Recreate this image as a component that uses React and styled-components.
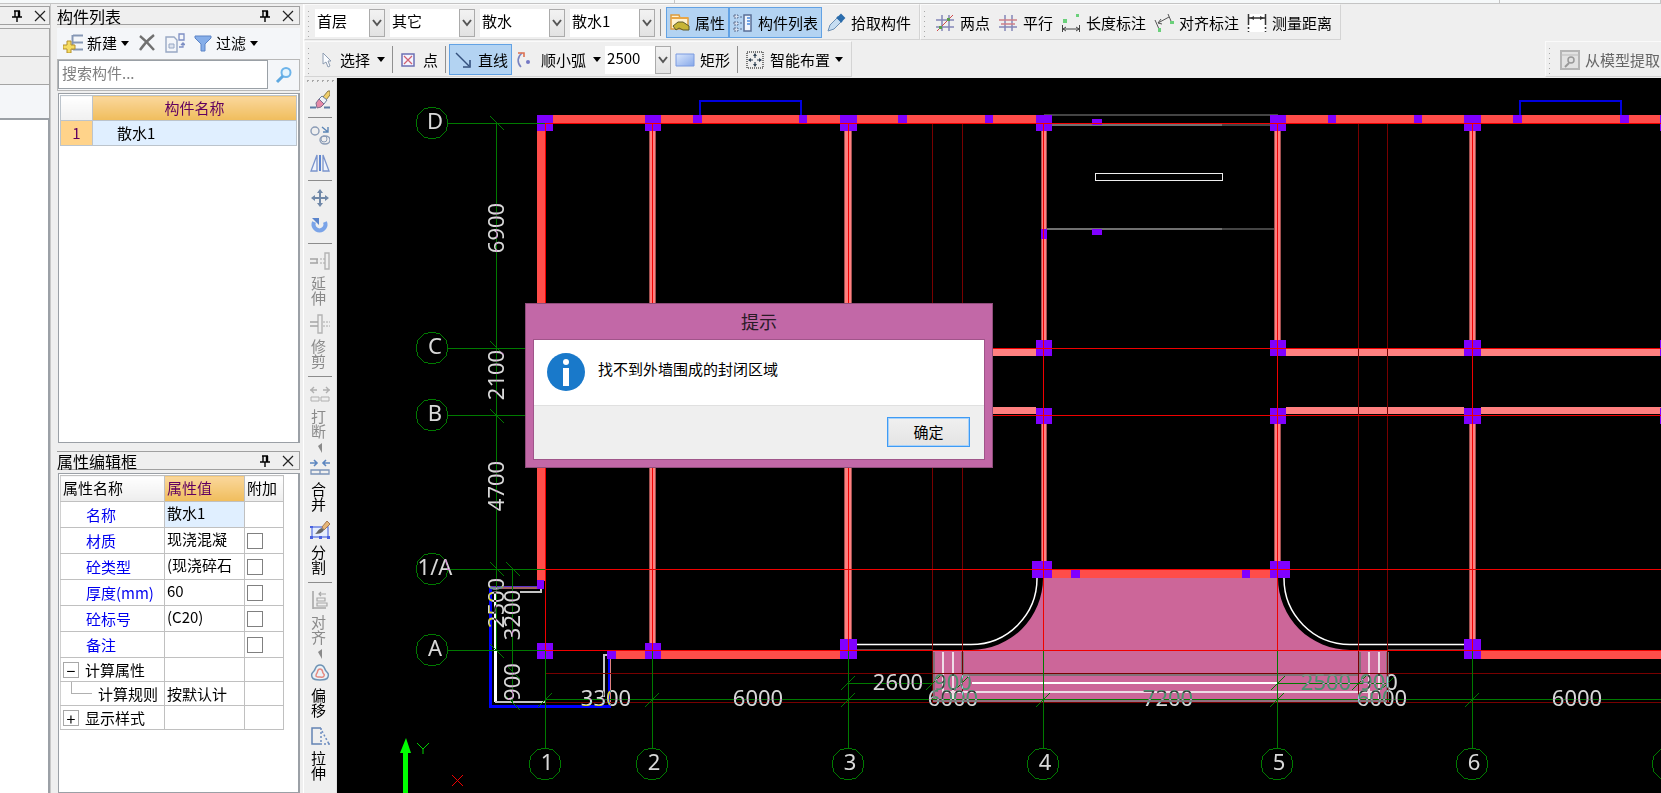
import React from 'react';
import styled, { createGlobalStyle, css } from 'styled-components';

const FONT = '"Noto Sans CJK SC", sans-serif';

/* ---------- icons ---------- */

const Svg = ({ w = 20, h = 20, children }) => (
  <svg width={w} height={h} viewBox={`0 0 ${w} ${h}`} fill="none" aria-hidden="true">{children}</svg>
);

const PinIcon = () => (
  <Svg w={12} h={14}>
    <path d="M3 2h6M4 2v6M1 8h10M6 8v5" stroke="#000" strokeWidth="1.4" />
    <path d="M8 2v6" stroke="#000" strokeWidth="2.4" />
  </Svg>
);

const CloseIcon = () => (
  <Svg w={12} h={12}><path d="M1 1l10 10M11 1L1 11" stroke="#222" strokeWidth="1.2" /></Svg>
);

const Caret = ({ color = '#000' }) => (
  <Svg w={8} h={5}><path d="M0 0h8L4 5z" fill={color} /></Svg>
);

const Chevron = () => (
  <Svg w={10} h={8}><path d="M1 1l4 5 4-5" stroke="#555" strokeWidth="2" /></Svg>
);

const NewIcon = () => (
  <Svg>
    <path d="M10 2.5h10M10 9.5h10M10 16.5h10M9.5 2v15" stroke="#8597b5" strokeWidth="2" />
    <path d="M4 8h4v4h4v4H8v4H4v-4H0v-4h4z" fill="#f5dc62" stroke="#b58f2a" />
  </Svg>
);

const DeleteIcon = () => (
  <Svg w={18} h={18}><path d="M2 2c5 4 9 8 14 14M16 1C11 5 6 10 2 16" stroke="#707070" strokeWidth="2.4" /></Svg>
);

const CopyPageIcon = () => (
  <Svg>
    <path d="M1 4h8l3 3v12H1z" fill="#f4f6fa" stroke="#98a8c4" strokeWidth="1.4" />
    <path d="M4 11h5v4H4z" fill="#dde3ee" stroke="#98a8c4" />
    <path d="M14 1h5v6h-5zM14 14h4v-4M16 12l2-2 2 2" stroke="#7d8fc4" strokeWidth="1.3" />
  </Svg>
);

const FilterIcon = () => (
  <Svg w={18} h={18}><path d="M1 2h16v2l-6 6v7H7v-7L1 4z" fill="#86aee9" stroke="#5c84c6" /></Svg>
);

const SearchIcon = () => (
  <Svg w={18} h={18}>
    <circle cx="11" cy="6.5" r="4.5" fill="#e5f4fd" stroke="#6db4ea" strokeWidth="2" />
    <path d="M8 10l-6 6" stroke="#5ea8e0" strokeWidth="3" />
  </Svg>
);

const PropIcon = () => (
  <Svg>
    <path d="M1 2h8l1 3h8v11H1z" fill="#fff2d0" stroke="#dd9c3c" strokeWidth="1.5" />
    <path d="M1 5h17" stroke="#e9a646" strokeWidth="2" />
    <path d="M3 13l5-4h5l6 4v4h-6l-4-2-3 2z" fill="#c7b436" stroke="#5e5a2a" />
  </Svg>
);

const ListIcon = () => (
  <Svg>
    <path d="M1 2h4v3H1zM1 9h4v3H1zM1 15h4v3H1z" fill="#d6e0f0" stroke="#5d6f90" strokeDasharray="2 1" />
    <path d="M7 4h2M7 10h2M7 16h2" stroke="#5d6f90" />
    <path d="M11 2h7v16h-7z" fill="#f0f5fc" stroke="#5a6f96" strokeWidth="1.5" />
    <path d="M14 5h3M14 8h3M14 11h3" stroke="#4a8be0" strokeWidth="1.5" />
  </Svg>
);

const DropperIcon = () => (
  <Svg>
    <path d="M2 18l2-6 7-7 4 4-7 7z" fill="#c6ddf2" stroke="#6c8fb4" />
    <path d="M11 4l5 5M13 4l2-2 3 3-2 2z" fill="#2f78bd" stroke="#2b6cab" strokeWidth="2" />
  </Svg>
);

const TwoPointIcon = () => (
  <Svg>
    <path d="M7 2v16M14 2v16M1 7h18M1 14h18" stroke="#8487b8" strokeWidth="1.5" />
    <path d="M2 18L18 2" stroke="#d04a4a" />
    <path d="M4 13h3v3H4zM12 5h3v3h-3z" fill="#5a9c4a" />
  </Svg>
);

const ParallelIcon = () => (
  <Svg>
    <path d="M7 2v16M14 2v16M1 14h18" stroke="#8487b8" strokeWidth="1.5" />
    <path d="M1 7h18M3 11h14" stroke="#d08088" strokeWidth="1.4" />
  </Svg>
);

const LengthIcon = () => (
  <Svg>
    <path d="M2 6h4v4H2zM15 1h3v3h-3z" fill="#6ad07a" />
    <path d="M1.5 12v7M18.5 12v7M2 16h16M5 14l-3 2 3 2M15 14l3 2-3 2" stroke="#444" />
  </Svg>
);

const AlignDimIcon = () => (
  <Svg>
    <path d="M4 10L15 4M1 7l4 9M14 1l3 7M7 6l-3 4 4 1" stroke="#555" />
    <path d="M4 15h3v4H4zM16 8h4v3h-4z" fill="#6ad07a" />
  </Svg>
);

const MeasureIcon = () => (
  <Svg>
    <path d="M1 1h18v18H1z" fill="#fff" />
    <path d="M1.5 1v18M18.5 1v18" stroke="#333" strokeDasharray="11 2 2 2" strokeWidth="1.5" />
    <path d="M2 5h16" stroke="#333" strokeWidth="1.5" />
    <path d="M3 5l4-2v4zM17 5l-4-2v4z" fill="#333" />
  </Svg>
);

const CursorIcon = () => (
  <Svg w={14} h={18}><path d="M4 2v11l3-2 2 5 2-1-2-5h3z" fill="#fafcff" stroke="#8e9db2" /></Svg>
);

const PointIcon = () => (
  <Svg w={16} h={16}>
    <path d="M2 2h12v12H2z" fill="#f4f4ff" stroke="#6c70b4" strokeWidth="1.5" />
    <path d="M4 4l8 8M12 4l-8 8" stroke="#d06070" strokeWidth="1.2" />
  </Svg>
);

const LineIcon = () => (
  <Svg h={18}>
    <path d="M3 2l13 13" stroke="#34507c" strokeWidth="1.4" />
    <path d="M17 9v7h-7" stroke="#34507c" strokeWidth="1.6" />
  </Svg>
);

const ArcIcon = () => (
  <Svg w={18} h={18}>
    <path d="M6 2C1 6 1 12 5 16" stroke="#7a84c0" strokeWidth="1.6" />
    <path d="M2 2h6v4" stroke="#dd7050" strokeWidth="1.6" />
    <circle cx="12" cy="11" r="2" fill="#7478c4" />
  </Svg>
);

const RectIcon = () => (
  <Svg>
    <defs>
      <linearGradient id="rectFill" x1="0" y1="0" x2="1" y2="1">
        <stop offset="0" stopColor="#dce8fc" />
        <stop offset="1" stopColor="#86a8ea" />
      </linearGradient>
    </defs>
    <path d="M1 4h18v12H1z" fill="url(#rectFill)" stroke="#7a9ae0" />
  </Svg>
);

const SmartIcon = () => (
  <Svg>
    <path d="M2 2h16v16H2z" stroke="#777" strokeDasharray="1 1" strokeWidth="2" />
    <path d="M10 4v4M10 12v4M4 10h4M12 10h4" stroke="#345" strokeWidth="1.2" />
    <path d="M10 3l2 3H8zM10 17l2-3H8zM3 10l3-2v4zM17 10l-3-2v4z" fill="#345" />
  </Svg>
);

const ModelIcon = () => (
  <Svg>
    <path d="M1 1h18v18H1z" fill="#e2e2e2" stroke="#b5b5b5" strokeWidth="2" />
    <path d="M1 5h18" stroke="#bbb" />
    <circle cx="11" cy="10" r="3" stroke="#999" strokeWidth="1.5" />
    <path d="M9 13l-4 4" stroke="#999" strokeWidth="2" />
  </Svg>
);

const EraserIcon = () => (
  <Svg>
    <path d="M0 17.5h6M14 17.5h6" stroke="#5c7ca6" strokeWidth="2" />
    <path d="M13 7l5-6h2v4l-4 5z" fill="#f0cf6a" stroke="#8c7a48" />
    <path d="M9 9l3-3 5 4-3 4z" fill="#eef2f8" stroke="#6b7f9e" />
    <path d="M6 13l3-4 5 5-3 3-4 1z" fill="#e58aa8" stroke="#7e6b8a" />
  </Svg>
);

const CopyIcon = () => (
  <Svg>
    <circle cx="5" cy="6" r="4" stroke="#8b9cb6" strokeWidth="1.4" />
    <path d="M12 2l6 5M18 2v5h-5" stroke="#5c86b6" strokeWidth="1.4" />
    <ellipse cx="15" cy="15" rx="5" ry="4" stroke="#8b9cb6" strokeWidth="1.4" />
    <circle cx="14" cy="14" r="3" stroke="#8b9cb6" />
  </Svg>
);

const MirrorIcon = () => (
  <Svg>
    <path d="M7 2v16H1zM13 2v16h6z" fill="#f0f4fc" stroke="#7a94cc" strokeWidth="1.3" />
    <path d="M10 2v16" stroke="#5c84d0" strokeWidth="2" />
  </Svg>
);

const MoveIcon = () => (
  <Svg>
    <path d="M10 3v14M3 10h14" stroke="#7088a8" strokeWidth="2" />
    <path d="M10 1l3 4H7zM10 19l3-4H7zM1 10l4-3v6zM19 10l-4-3v6z" fill="#7088a8" />
  </Svg>
);

const RotateIcon = () => (
  <Svg>
    <path d="M4 6a6 6 0 1 0 11 0" stroke="#7ba4e8" strokeWidth="4" />
    <path d="M2 2h7v7z" fill="#5a84cc" />
  </Svg>
);

const ExtendIcon = () => (
  <Svg>
    <path d="M15 2h4v16h-4z" stroke="#b4b4b4" strokeWidth="1.4" />
    <path d="M0 8h8M0 12h8M7 8v4" stroke="#a5a5a5" strokeWidth="1.4" />
    <path d="M10 8h5M10 12h5" stroke="#aaa" strokeDasharray="2 1" />
  </Svg>
);

const TrimIcon = () => (
  <Svg>
    <path d="M8 1h4v18H8z" stroke="#b4b4b4" strokeWidth="1.4" />
    <path d="M0 8h8M0 12h8" stroke="#a5a5a5" strokeWidth="1.4" />
    <path d="M13 8h7M13 12h7" stroke="#aaa" strokeDasharray="2 1" />
  </Svg>
);

const BreakIcon = () => (
  <Svg>
    <path d="M1 13h8v4H1zM11 13h8v4h-8z" stroke="#b0b0b0" />
    <path d="M0 6h7M13 6h7M4 3L1 6l3 3M16 3l3 3-3 3" stroke="#b0b0b0" strokeWidth="1.4" />
  </Svg>
);

const MergeIcon = () => (
  <Svg>
    <path d="M1 13h9v4H1zM10 13h9v4h-9z" stroke="#7c94b8" strokeWidth="1.3" />
    <path d="M0 6h7M13 6h7M4 3l3 3-3 3M16 3l-3 3 3 3" stroke="#5c86c0" strokeWidth="1.6" />
  </Svg>
);

const SplitIcon = () => (
  <Svg>
    <path d="M2 7h16v10H2z" fill="#e6eefc" stroke="#6c84e4" strokeWidth="1.4" />
    <path d="M0 6h3v2H0zM0 16h3v3H0zM17 16h3v3h-3zM9 16h3v3H9z" fill="#4a62e0" />
    <path d="M12 7l5-6 3 3-6 6z" fill="#e6b678" stroke="#a87850" />
    <path d="M5 14c2-1 3-5 7-6l2 2c-2 3-5 4-9 4z" fill="#666" />
  </Svg>
);

const AlignIcon = () => (
  <Svg>
    <path d="M3 1v18M3 18h13" stroke="#a8a8a8" strokeWidth="1.6" />
    <path d="M7 8h8v3H7zM7 13h10v3H7zM16 4H9M11 2L9 4l2 2" stroke="#a8a8a8" strokeWidth="1.2" />
  </Svg>
);

const OffsetIcon = () => (
  <Svg>
    <path d="M10 2c5 0 4 4 6 6s3 3 2 6-4 3-8 3-7 0-8-3 0-4 2-6 1-6 6-6z" fill="#eaf2f8" stroke="#6f93b4" strokeWidth="1.5" />
    <path d="M10 6c3 0 2 2 3 4s2 1 1 3-2 1-4 1-4 0-4-1 0-2 1-3 0-4 3-4z" stroke="#e58a80" strokeWidth="1.5" />
  </Svg>
);

const StretchIcon = () => (
  <Svg>
    <path d="M11 2H2v16h8" stroke="#6484b4" strokeWidth="1.5" />
    <path d="M11 2v16M12 5l7 13M10 18h10" stroke="#6c8cc0" strokeDasharray="2 2" strokeWidth="1.5" />
  </Svg>
);

const InfoIcon = () => (
  <Svg w={38} h={38}>
    <circle cx="19" cy="19" r="19" fill="#1979ca" />
    <circle cx="19" cy="9" r="3" fill="#fff" />
    <path d="M16 15h6v18h-6z" fill="#fff" />
  </Svg>
);

/* ---------- toolbars ---------- */

const Picker = ({ label, value, width }) => (
  <PickerBox $width={width}>
    <select aria-label={label} defaultValue={value}>
      <option>{value}</option>
    </select>
    <PickerArrow><Chevron /></PickerArrow>
  </PickerBox>
);

const TopBars = () => (
  <Bars>
    <BarRow>
      <Bar>
        <Grip />
        <Pickers>
          <Picker label="楼层" value="首层" width={70} />
          <Picker label="类型" value="其它" width={85} />
          <Picker label="构件类型" value="散水" width={85} />
          <Picker label="构件" value="散水1" width={85} />
        </Pickers>
        <Divider $wide />
        <BarButton $active><PropIcon />属性</BarButton>
        <BarButton $active><ListIcon />构件列表</BarButton>
        <BarButton><DropperIcon />拾取构件</BarButton>
      </Bar>
      <Bar>
        <Grip />
        <BarButton><TwoPointIcon />两点</BarButton>
        <BarButton><ParallelIcon />平行</BarButton>
        <BarButton><LengthIcon />长度标注</BarButton>
        <BarButton><AlignDimIcon />对齐标注</BarButton>
        <BarButton><MeasureIcon />测量距离</BarButton>
      </Bar>
    </BarRow>
    <BarRow>
      <Bar>
        <Grip />
        <BarButton $wide><CursorIcon />选择<Caret /></BarButton>
        <Divider />
        <BarButton $wide><PointIcon />点</BarButton>
        <Divider />
        <BarButton $active><LineIcon />直线</BarButton>
        <BarButton $wide><ArcIcon />顺小弧<Caret /></BarButton>
        <Picker label="半径" value="2500" width={66} />
        <BarButton><RectIcon />矩形</BarButton>
        <Divider />
        <BarButton><SmartIcon />智能布置<Caret /></BarButton>
      </Bar>
      <Spacer />
      <Bar $end>
        <Grip />
        <BarButton disabled><ModelIcon />从模型提取</BarButton>
      </Bar>
    </BarRow>
  </Bars>
);

const SideBar = () => (
  <Side>
    <SideGrip />
    <SideTool aria-label="删除"><SideIcon><EraserIcon /></SideIcon></SideTool>
    <SideRule />
    <SideTool aria-label="复制"><SideIcon><CopyIcon /></SideIcon></SideTool>
    <SideTool aria-label="镜像"><SideIcon><MirrorIcon /></SideIcon></SideTool>
    <SideRule />
    <SideTool aria-label="移动"><SideIcon><MoveIcon /></SideIcon></SideTool>
    <SideTool aria-label="旋转"><SideIcon><RotateIcon /></SideIcon></SideTool>
    <SideRule />
    <SideTool disabled><SideIcon><ExtendIcon /></SideIcon><SideText>延伸</SideText></SideTool>
    <SideTool disabled><SideIcon><TrimIcon /></SideIcon><SideText>修剪</SideText></SideTool>
    <SideRule />
    <SideTool disabled>
      <SideIcon><BreakIcon /></SideIcon><SideText>打断</SideText><SideMore />
    </SideTool>
    <SideTool><SideIcon><MergeIcon /></SideIcon><SideText>合并</SideText></SideTool>
    <SideTool><SideIcon><SplitIcon /></SideIcon><SideText>分割</SideText></SideTool>
    <SideRule />
    <SideTool disabled>
      <SideIcon><AlignIcon /></SideIcon><SideText>对齐</SideText><SideMore />
    </SideTool>
    <SideTool><SideIcon><OffsetIcon /></SideIcon><SideText>偏移</SideText></SideTool>
    <SideTool><SideIcon><StretchIcon /></SideIcon><SideText>拉伸</SideText></SideTool>
  </Side>
);

/* ---------- left panels ---------- */

const PanelHead = ({ title }) => (
  <Head>
    <h2>{title}</h2>
    <button type="button" aria-label="固定"><PinIcon /></button>
    <button type="button" aria-label="关闭"><CloseIcon /></button>
  </Head>
);

const ComponentPanel = () => (
  <ListPanel>
    <PanelHead title="构件列表" />
    <ListTools>
      <ToolButton><NewIcon />新建<Caret /></ToolButton>
      <ToolButton aria-label="删除"><DeleteIcon /></ToolButton>
      <ToolButton aria-label="复制"><CopyPageIcon /></ToolButton>
      <ToolButton><FilterIcon />过滤<Caret /></ToolButton>
    </ListTools>
    <SearchRow>
      <input aria-label="搜索构件" placeholder="搜索构件..." />
      <button type="button" aria-label="搜索"><SearchIcon /></button>
    </SearchRow>
    <Sheet>
      <ListTable>
        <thead>
          <tr><th aria-label="序号" /><th>构件名称</th></tr>
        </thead>
        <tbody>
          <tr><td>1</td><td>散水1</td></tr>
        </tbody>
      </ListTable>
    </Sheet>
  </ListPanel>
);

const props = [
  { name: '名称', value: '散水1', current: true },
  { name: '材质', value: '现浇混凝', check: true },
  { name: '砼类型', value: '(现浇碎石', check: true },
  { name: '厚度(mm)', value: '60', check: true },
  { name: '砼标号', value: '(C20)', check: true },
  { name: '备注', value: '', check: true },
];

const PropertyPanel = () => (
  <PropPanel>
    <PanelHead title="属性编辑框" />
    <Sheet>
      <PropTable>
        <colgroup><col width="104" /><col width="80" /><col width="39" /></colgroup>
        <thead>
          <tr><th>属性名称</th><th>属性值</th><th>附加</th></tr>
        </thead>
        <tbody>
          {props.map(p => (
            <PropRow key={p.name} $current={p.current}>
              <td>{p.name}</td>
              <td>{p.value}</td>
              <td>{p.check && <input type="checkbox" aria-label={`${p.name} 附加`} />}</td>
            </PropRow>
          ))}
          <GroupRow>
            <td><Group><Expander aria-label="收起">−</Expander>计算属性</Group></td><td /><td />
          </GroupRow>
          <GroupRow>
            <td><Group><Branch />计算规则</Group></td><td>按默认计</td><td />
          </GroupRow>
          <GroupRow>
            <td><Group><Expander aria-label="展开">+</Expander>显示样式</Group></td><td /><td />
          </GroupRow>
        </tbody>
      </PropTable>
    </Sheet>
  </PropPanel>
);

/* ---------- drawing ---------- */

const axesX = [545, 652, 848, 1043, 1277, 1472, 1668];
const axesY = [
  { label: 'D', y: 123 },
  { label: 'C', y: 348 },
  { label: 'B', y: 415 },
  { label: '1/A', y: 569 },
  { label: 'A', y: 650 },
];

// x, y, w, h
const outerWalls = [
  [537, 115, 507, 8], [1278, 115, 400, 8], [537, 123, 8, 458],
  [615, 651, 226, 8], [1481, 651, 200, 8], [1052, 570, 218, 8],
];
const innerWalls = [
  [649, 131, 7, 512], [844, 131, 8, 508],
  [1041, 131, 6, 210], [1041, 424, 6, 138],
  [1274, 131, 7, 210], [1274, 424, 7, 138],
  [1469, 131, 7, 210], [1469, 424, 7, 216],
  [856, 348, 180, 8], [1286, 348, 178, 8], [1481, 348, 190, 8],
  [856, 407, 180, 7], [1286, 407, 178, 7], [1481, 407, 190, 7],
];
const columns = [
  [537, 115, 16, 16], [645, 115, 16, 16], [840, 115, 17, 16], [1036, 115, 16, 16],
  [1270, 115, 16, 16], [1464, 115, 17, 16], [1660, 115, 16, 16],
  [1036, 340, 16, 16], [1270, 340, 16, 16], [1464, 340, 17, 16], [1660, 340, 16, 16],
  [1036, 408, 16, 16], [1270, 408, 16, 16], [1464, 408, 17, 16], [1660, 408, 16, 16],
  [1032, 561, 20, 17], [1270, 561, 20, 17],
  [537, 643, 16, 16], [645, 643, 16, 16], [840, 639, 17, 20], [1464, 639, 17, 20],
  [693, 115, 9, 8], [799, 115, 8, 8], [898, 115, 9, 8], [985, 115, 8, 8],
  [1328, 115, 8, 8], [1414, 115, 8, 8], [1513, 115, 9, 8], [1620, 115, 9, 8],
  [1092, 119, 10, 6], [1092, 229, 10, 6], [1041, 229, 6, 10],
  [537, 580, 7, 9], [607, 651, 9, 8], [1071, 570, 9, 8], [1242, 570, 8, 8],
];

const rects = (list, fill) => list.map(([x, y, w, h]) => (
  <rect key={`${x}-${y}`} x={x} y={y} width={w} height={h} fill={fill} />
));

const dimsAcross = [
  ['3300', 606, 706], ['6000', 758, 706], ['6000', 953, 706], ['7200', 1168, 706],
  ['6000', 1382, 706], ['6000', 1577, 706],
  ['2600', 898, 690], ['900', 953, 690], ['2500', 1326, 690], ['900', 1379, 690],
];
const dimsDown = [
  ['6900', 504, 228], ['2100', 504, 375], ['4700', 504, 486],
  ['2500', 504, 603], ['3200', 520, 615], ['900', 520, 682],
];
const ticksDown = [[497, 123], [497, 348], [497, 416], [497, 569], [497, 651], [513, 569], [513, 672], [513, 703]];
const ticksAcross = [
  ...axesX.map(x => [x, 700]), [848, 683], [933, 683], [962, 683], [1278, 683], [1359, 683], [1388, 683],
];

// twelve-sided axis bubble
const Bubble = ({ cx, cy }) => {
  const pts = Array.from({ length: 12 }, (_, i) => {
    const a = (i * Math.PI) / 6;
    return `${cx + Math.round(16 * Math.sin(a))},${cy + Math.round(16 * Math.cos(a))}`;
  });
  return <polygon points={pts.join(' ')} fill="none" stroke="#007a00" shapeRendering="crispEdges" />;
};

const Plan = () => (
  <PlanSvg role="img" aria-label="首层平面图">
    <g transform="translate(-337 -78)">
      <rect x="337" y="78" width="4000" height="3000" />

      <path d="M1043 578H1278A72 72 0 0 0 1350 650H1388V703H932V650H971A72 72 0 0 0 1043 578Z" fill="#cc6699" />
      <path d="M857 644.500H971A66 66 0 0 0 1037 578M1284 578A66 66 0 0 0 1350 644.500H1464" fill="none" stroke="#fff" strokeWidth="1.5" />
      <g shapeRendering="crispEdges" fill="none">
        <path d="M857 649.500H932M1388 649.500H1464" stroke="#555" />
        <path d="M933 652V702M1387 652V702M962 652V673M1359 652V673M962 674H1359" stroke="#807078" strokeWidth="3" />
        <path d="M932 701H1388" stroke="#907080" strokeWidth="4" />
        <path d="M943 652V700M953 652V700M1369 652V700M1379 652V700M943 692H1380" stroke="#eedde6" strokeWidth="2" />
        <path d="M972 683H1278" stroke="#fff" strokeWidth="2" />

        <path d="M1044 115H1278M1222 125H1270M1222 229H1275" stroke="#444" strokeWidth="2" />
        <path d="M1052 125H1222M1047 229H1222" stroke="#707070" strokeWidth="2" />
        <path d="M1095.500 173.500H1222.500V180.500H1095.500Z" stroke="#eee" />
        <path d="M700 115V101H801V115M1520 115V101H1621V115" stroke="#0000e0" strokeWidth="2" />

        <path d="M490 587V706H609V659" stroke="#0000ff" strokeWidth="3" />
        <path d="M490 587H537" stroke="#a06060" strokeWidth="3" />
        <path d="M490 586.500H537" stroke="#5a30c8" />
        <path d="M495 592V702" stroke="#fff" strokeWidth="3" />
        <path d="M495 702H545M520 592H541V588M604 697V655H608" stroke="#c4c4c4" strokeWidth="2" />
        <path d="M610.500 659V706" stroke="#e08080" />

        {rects(outerWalls, '#ff4d4a')}
        {rects(innerWalls, '#ff8080')}
        <path
          d="M649.500 131V643M655.500 131V643M844.500 131V639M851.500 131V639M1041.500 131V340M1046.500 131V340M1041.500 424V561M1046.500 424V561M1274.500 131V340M1280.500 131V340M1274.500 424V561M1280.500 424V561M1469.500 131V340M1475.500 131V340M1469.500 424V639M1475.500 424V639"
          stroke="#a05050"
        />
        <path d="M932.500 123V702M962.500 123V702M1358.500 123V702M1387.500 123V702M545 673.500H1700M545 702.500H1700" stroke="#780000" />
        {rects(columns, '#8000ff')}

        {axesY.map(a => <path key={a.label} d={`M545 ${a.y}.5H1700`} stroke="#f00000" />)}
        {axesX.map(x => <path key={x} d={`M${x}.5 123V651`} stroke="#f00000" />)}

        <g stroke="#007a00">
          {axesY.map(a => <path key={a.label} d={`M448 ${a.y}.5H545`} />)}
          {axesX.map(x => <path key={x} d={`M${x}.5 651V748`} />)}
          <path d="M496.500 123V651M512.500 569V703M545 699.500H1700M848 683.500H933M1278 683.500H1388" />
        </g>
      </g>

      <g stroke="#007a00">
        {ticksDown.map(([x, y]) => <path key={`${x}-${y}`} d={`M${x - 7} ${y - 7}l14 14`} />)}
        {ticksAcross.map(([x, y]) => <path key={`${x}-${y}`} d={`M${x - 7} ${y + 7}l14 -14`} />)}
      </g>
      {axesY.map(a => <Bubble key={a.label} cx={432} cy={a.y} />)}
      {axesX.map(x => <Bubble key={x} cx={x} cy={764} />)}

      <PlanText>
        {axesY.map(a => <text key={a.label} x="435" y={a.y + 6}>{a.label}</text>)}
        {axesX.map((x, i) => <text key={x} x={x + 2} y="770">{i + 1}</text>)}
        {dimsAcross.map(([t, x, y]) => <text key={`${x}-${y}`} x={x} y={y}>{t}</text>)}
        {dimsDown.map(([t, x, y]) => (
          <text key={`${x}-${y}`} transform={`translate(${x} ${y}) rotate(-90)`}>{t}</text>
        ))}
      </PlanText>

      <path d="M403 1000V753H400L406 738L411 753H408V1000Z" fill="#00ff00" />
      <path d="M417 743l6 6l6 -6M423 749v5" fill="none" stroke="#00d000" />
      <path d="M452 775l11 11M463 775l-11 11" stroke="#f00000" />
    </g>
  </PlanSvg>
);

const App = () => (
  <>
    <GlobalStyle />
    <Window>
      <TopStrip><span /><span /><span /></TopStrip>
      <Main>
        <Dock>
          <PanelHead title="" />
          <DockBox $h={28} />
          <DockBox $h={28} />
          <DockBox $h={34} $light />
          <DockBody />
        </Dock>
        <Panels>
          <ComponentPanel />
          <PropertyPanel />
        </Panels>
        <Work>
          <TopBars />
          <WorkBody>
            <SideBar />
            <Canvas>
              <Plan />
              <Dialog role="dialog" aria-labelledby="dlg-title">
                <DialogTitle id="dlg-title">提示</DialogTitle>
                <DialogBody>
                  <Message><InfoIcon /><p>找不到外墙围成的封闭区域</p></Message>
                  <DialogFoot><button type="button">确定</button></DialogFoot>
                </DialogBody>
              </Dialog>
            </Canvas>
          </WorkBody>
        </Work>
      </Main>
    </Window>
  </>
);

export default App;

/* ---------- styles ---------- */

const GlobalStyle = createGlobalStyle`
  * { box-sizing: border-box; }
  body {
    margin: 0;
    background: #efefef;
    color: #000;
    font: 15px/20px ${FONT};
  }
  button, input, select {
    font: inherit;
    color: inherit;
    margin: 0;
    padding: 0;
    border: 0;
    background: none;
  }
  svg { display: block; flex: none; }
`;

const Window = styled.div`
  display: flex;
  flex-direction: column;
  height: 100vh;
  overflow: hidden;
`;

const TopStrip = styled.div`
  display: grid;
  grid-template-columns: 675px 825px 1fr;
  flex: none;
  height: 4px;
  background: #f5f8f9;
  border-bottom: 1px solid #c4c4c4;
  span { border-right: 1px solid #c4c4c4; }
`;

const Main = styled.div`
  display: flex;
  flex: 1;
  min-height: 0;
`;

const Dock = styled.div`
  display: flex;
  flex-direction: column;
  width: 51px;
  flex: none;
  padding-top: 2px;
  border-right: 1px solid #c8c8c8;
`;

const DockBox = styled.div`
  flex: none;
  height: ${p => p.$h}px;
  background: ${p => (p.$light ? '#f4f6f9' : '#efefef')};
  border: 1px solid #a4a4a4;
  border-width: 1px 1px 0 0;
`;

const DockBody = styled.div`
  flex: 1;
  background: #fff;
  border: 2px solid #9ba0a6;
  border-width: 2px 2px 0 0;
`;

const Panels = styled.div`
  display: flex;
  flex-direction: column;
  flex: none;
  width: 252px;
  padding: 2px 3px 0 6px;
`;

const Head = styled.header`
  display: flex;
  align-items: center;
  flex: none;
  height: 19px;
  margin-bottom: 3px;
  padding-right: 5px;
  border: 1px solid #a0a0a0;
  border-left-width: 0;
  h2 {
    flex: 1;
    margin: 0;
    font-size: 16px;
    font-weight: 400;
    line-height: 16px;
    white-space: nowrap;
  }
  button { margin-left: 11px; }
`;

const ListPanel = styled.section`
  display: flex;
  flex-direction: column;
  height: 437px;
  margin-bottom: 8px;
`;

const PropPanel = styled.section`
  display: flex;
  flex-direction: column;
  flex: 1;
  min-height: 0;
`;

const ListTools = styled.div`
  display: flex;
  align-items: center;
  gap: 9px;
  height: 31px;
  padding: 0 0 1px 6px;
  background: #f4f6f9;
`;

const ToolButton = styled.button.attrs({ type: 'button' })`
  display: flex;
  align-items: center;
  gap: 4px;
`;

const SearchRow = styled.div`
  display: flex;
  height: 32px;
  margin-bottom: 2px;
  border: 1px solid #b8b8b8;
  background: #f4f6f9;
  input {
    flex: 1;
    min-width: 0;
    height: 29px;
    padding: 0 3px 4px;
    background: #fff;
    border: 1px solid #9aa0a6;
  }
  input::placeholder { color: #808080; opacity: 1; }
  button {
    display: grid;
    place-items: center;
    width: 31px;
  }
`;

const Sheet = styled.div`
  flex: 1;
  min-height: 0;
  margin-left: 1px;
  padding: 1px 1px 0;
  background: #fff;
  border: 1px solid #9ba0a6;
  border-right-width: 2px;
`;

const headFill = css`background: linear-gradient(#fad79c, #f0bd5c);`;

const ListTable = styled.table`
  width: 100%;
  table-layout: fixed;
  border-collapse: collapse;
  th, td {
    height: 25px;
    padding: 0;
    border: 1px solid #bcc4cc;
    font-weight: 400;
    line-height: 20px;
  }
  th { background: linear-gradient(#fff, #f0f0f0); color: #600060; }
  th:first-child { width: 32px; }
  th:last-child { ${headFill} }
  td { padding-left: 24px; background: #e0efff; }
  td:first-child { padding: 0; background: #ffd38a; color: #600060; text-align: center; }
`;

const PropTable = styled.table`
  width: 224px;
  table-layout: fixed;
  border-collapse: collapse;
  th, td {
    height: 26px;
    padding: 0 2px;
    border: 1px solid #c0c0c0;
    border-left-color: #d0d0d0;
    font-weight: 400;
    line-height: 20px;
    text-align: left;
    white-space: nowrap;
    overflow: hidden;
  }
  th { padding-bottom: 2px; background: linear-gradient(#fff, #ededed); }
  th:nth-child(2) { ${headFill} color: #600060; }
  input {
    display: block;
    appearance: none;
    width: 16px;
    height: 16px;
    background: #fff;
    border: 1px solid #808080;
  }
`;

const PropRow = styled.tr`
  td:first-child { padding-left: 25px; color: #0000f0; }
  td:nth-child(2) { padding-bottom: 4px; background: ${p => (p.$current ? '#e0efff' : '#fff')}; }
`;

const GroupRow = styled.tr`
  && td { height: 24px; }
`;

const Group = styled.div`
  display: flex;
  align-items: center;
  gap: 6px;
`;

const Expander = styled.button.attrs({ type: 'button' })`
  width: 16px;
  height: 16px;
  border: 1px solid #a8a8a8;
  font-size: 16px;
  line-height: 12px;
`;

const Branch = styled.span`
  width: 21px;
  height: 12px;
  margin: -12px 0 0 8px;
  border: 1px solid #b0b0b0;
  border-width: 0 0 1px 1px;
`;

const Work = styled.div`
  display: flex;
  flex-direction: column;
  flex: 1;
  min-width: 0;
  border-left: 1px solid #fff;
`;

const Bars = styled.div`
  flex: none;
  height: 74px;
`;

const BarRow = styled.div`
  display: flex;
  height: 37px;
`;

const Bar = styled.div`
  display: flex;
  align-items: center;
  flex: none;
  height: 36px;
  padding: 1px ${p => (p.$end ? 0 : 4)}px 0 2px;
  border: 1px solid #d4d4d4;
  border-top-color: #fafafa;
  border-left-color: #fafafa;
  ${p => p.$end && 'margin-right: -4px;'}
`;

const Spacer = styled.div`
  flex: 1;
`;

const Grip = styled.span`
  width: 3px;
  height: 28px;
  margin-right: 5px;
  background: radial-gradient(circle, #a8a8a8 1px, transparent 1px) 0 0 / 3px 5px;
`;

const Divider = styled.span`
  width: 1px;
  height: 27px;
  margin: 0 ${p => (p.$wide ? 5 : 3)}px;
  background: #909090;
`;

const BarButton = styled.button.attrs({ type: 'button' })`
  display: flex;
  align-items: center;
  gap: 5px;
  height: 31px;
  padding: 0 3px;
  border: 1px solid transparent;
  white-space: nowrap;
  ${p => p.$wide && 'gap: 7px;'}
  ${p => p.$active && css`
    background: #b3d3f2;
    border-color: #62a2e4;
  `}
  &:disabled { color: #666; }
`;

const Pickers = styled.div`
  display: flex;
  gap: 5px;
`;

const PickerBox = styled.span`
  display: flex;
  width: ${p => p.$width}px;
  height: 28px;
  background: #fff;
  select {
    flex: 1;
    min-width: 0;
    padding: 0 2px 3px;
    appearance: none;
  }
`;

const PickerArrow = styled.span`
  display: grid;
  place-items: center;
  width: 16px;
  background: linear-gradient(#f2f2f2, #e2e2e2);
  border: 1px solid #ababab;
  pointer-events: none;
`;

const WorkBody = styled.div`
  display: flex;
  flex: 1;
  min-height: 0;
`;

const Side = styled.nav`
  display: flex;
  flex-direction: column;
  align-items: center;
  flex: none;
  width: 33px;
  border-right: 1px solid #e0e0e0;
`;

const SideGrip = styled.span`
  width: 30px;
  height: 8px;
  background: radial-gradient(circle, #a8a8a8 1px, transparent 1px) 0 0 / 5px 5px repeat-x;
`;

const SideTool = styled.button.attrs({ type: 'button' })`
  display: flex;
  flex-direction: column;
  align-items: center;
  flex: none;
  width: 30px;
  &:disabled { color: #8a8a8a; }
`;

const SideIcon = styled.span`
  display: grid;
  place-items: center;
  height: 28px;
`;

const SideText = styled.span`
  width: 15px;
  margin: 0 3px 5px 0;
  line-height: 15px;
  word-break: break-all;
`;

const SideMore = styled.span`
  width: 0;
  height: 10px;
  border: 3px solid transparent;
  border-right: 4px solid #8a8a8a;
  border-bottom-width: 7px;
  border-left: 0;
`;

const SideRule = styled.span`
  flex: none;
  width: 24px;
  height: 1px;
  margin: 3px 0;
  background: #8c8c8c;
`;

const Canvas = styled.main`
  position: relative;
  flex: 1;
  min-width: 0;
  overflow: hidden;
  background: #000;
`;

const PlanSvg = styled.svg`
  width: 100%;
  height: 100%;
`;

const PlanText = styled.g`
  font: 22px "Noto Sans", sans-serif;
  fill: #fff;
  opacity: 0.85;
  text-anchor: middle;
  mix-blend-mode: difference;
`;

const Dialog = styled.section`
  position: absolute;
  top: 225px;
  left: 188px;
  width: 468px;
  padding: 0 7px 7px;
  background: #c268a7;
  border: 1px solid #8f4d7b;
`;

const DialogTitle = styled.h1`
  margin: 0;
  font-size: 18px;
  font-weight: 400;
  line-height: 35px;
  text-align: center;
  color: #2a1a26;
`;

const DialogBody = styled.div`
  background: #efefef;
  border: 1px solid #a0558a;
`;

const Message = styled.div`
  display: flex;
  gap: 13px;
  height: 65px;
  padding: 13px 13px;
  background: #fff;
  p { margin: 6px 0 0; }
`;

const DialogFoot = styled.div`
  display: flex;
  justify-content: flex-end;
  padding: 11px 14px 12px;
  border-top: 1px solid #e0e0e0;
  button {
    width: 83px;
    height: 30px;
    background: linear-gradient(#f0f0f0, #e4e4e4);
    border: 1px solid #3f9bf4;
    box-shadow: inset 0 0 0 1px #a8d2fa;
  }
`;
